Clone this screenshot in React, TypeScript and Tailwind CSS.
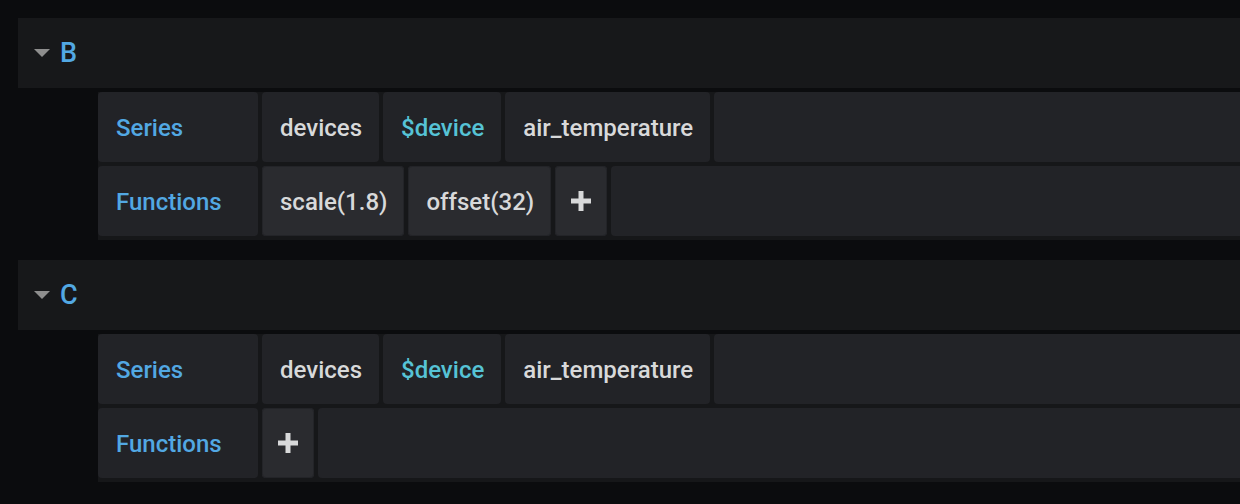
import React from "react";

// One query row: a label cell, then segments, then an empty filler
interface Segment {
  text: string;
  kind?: "plain" | "variable" | "func" | "add";
}

interface QueryBlock {
  refId: string;
  series: Segment[];
  functions: Segment[];
}

const blocks: QueryBlock[] = [
  {
    refId: "B",
    series: [
      { text: "devices" },
      { text: "$device", kind: "variable" },
      { text: "air_temperature" },
    ],
    functions: [
      { text: "scale(1.8)", kind: "func" },
      { text: "offset(32)", kind: "func" },
      { text: "+", kind: "add" },
    ],
  },
  {
    refId: "C",
    series: [
      { text: "devices" },
      { text: "$device", kind: "variable" },
      { text: "air_temperature" },
    ],
    functions: [{ text: "+", kind: "add" }],
  },
];

const PlusIcon = () => (
  <svg width="20" height="20" viewBox="0 0 20 20" className="block">
    <path d="M10 0v20M0 10h20" stroke="#d8d9da" strokeWidth="5" />
  </svg>
);

const Cell: React.FC<{ seg: Segment }> = ({ seg }) => {
  if (seg.kind === "add") {
    return (
      <div className="flex items-center justify-center w-[52px] rounded-[4px] bg-[#2a2b2f] shadow-[inset_0_0_0_1px_#232428]">
        <PlusIcon />
      </div>
    );
  }
  const color = seg.kind === "variable" ? "text-[#56c3d6]" : "text-[#d8d9da]";
  const bg =
    seg.kind === "func"
      ? "bg-[#2a2b2f] shadow-[inset_0_0_0_1px_#232428]"
      : "bg-[#222327]";
  return (
    <div className={`flex items-center pt-[2px] pl-[18px] pr-[17px] rounded-[4px] ${bg} ${color}`}>
      {seg.text}
    </div>
  );
};

const QueryRow: React.FC<{ label: string; segments: Segment[] }> = ({ label, segments }) => (
  <div className="flex h-[70px] gap-1">
    <div className="flex items-center w-[160px] shrink-0 pt-[2px] pl-[18px] rounded-[4px] bg-[#222327] text-[#52a8e3]">
      {label}
    </div>
    {segments.map((seg, i) => (
      <Cell key={i} seg={seg} />
    ))}
    <div className="flex-1 rounded-l-[4px] bg-[#222327]" />
  </div>
);

export default function App() {
  return (
    <div
      className="w-[1240px] h-[504px] overflow-hidden bg-[#0b0c0e] pt-[18px] pl-[18px] flex flex-col gap-5"
      style={{ fontFamily: "Roboto, 'Liberation Sans', sans-serif" }}
    >
      {blocks.map((b) => (
        <div key={b.refId}>
          {/* collapsible header */}
          <div className="flex items-center h-[70px] bg-[#17181a] pl-4">
            <svg width="16" height="8" viewBox="0 0 16 8" className="block">
              <path d="M0 0h16L8 8z" fill="#8e8e8e" />
            </svg>
            <span className="ml-[10px] text-[27px] font-medium text-[#52a8e3] leading-none">
              {b.refId}
            </span>
          </div>
          <div className="ml-20 mt-1 flex flex-col gap-1 pb-1 bg-[#161719] text-[24px] font-medium leading-none">
            <QueryRow label="Series" segments={b.series} />
            <QueryRow label="Functions" segments={b.functions} />
          </div>
        </div>
      ))}
    </div>
  );
}
